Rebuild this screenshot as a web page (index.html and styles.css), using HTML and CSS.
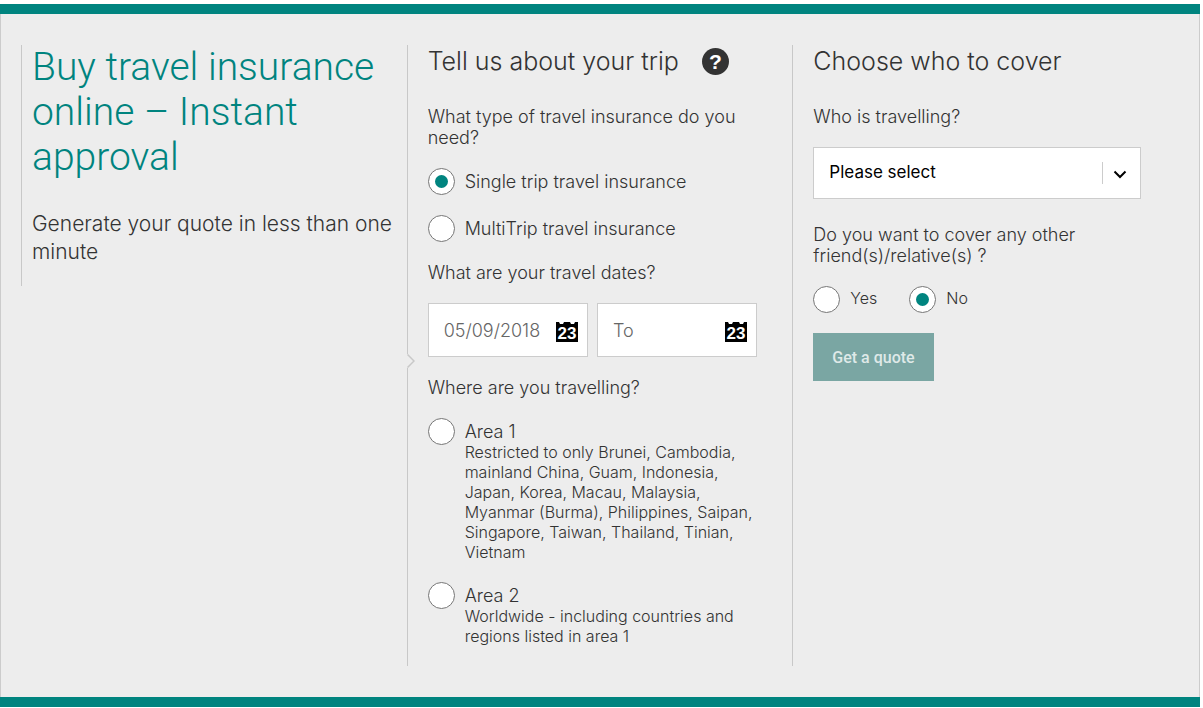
FILE: index.html
```
<!DOCTYPE html>
<html lang="en">
  <head>
    <meta charset="UTF-8" />
    <meta name="viewport" content="width=device-width, initial-scale=1.0" />
    <title>Travel insurance</title>
    <link rel="stylesheet" href="styles.css">
  </head>
  <body>
    <form class="quote">
      <section class="column intro">
        <h1>Buy travel insurance online – Instant approval</h1>
        <p class="lead">Generate your quote in less than one minute</p>
      </section>

      <section class="column trip">
        <!-- Arrow pointing from the intro to the form -->
        <svg class="pointer" width="8" height="14" viewBox="0 0 8 14" aria-hidden="true">
          <path d="M0 0h1L7 7 1 14H0z" fill="#ededed" />
          <path d="M0.5 0.5L7 7L0.5 13.5" fill="none" stroke="#c8c8c8" stroke-width="1.5" />
        </svg>

        <div class="heading">
          <h2>Tell us about your trip</h2>
          <button type="button" class="help" aria-label="Help">?</button>
        </div>

        <fieldset>
          <legend>What type of travel insurance do you need?</legend>
          <div class="options">
            <label class="option">
              <input type="radio" name="type" value="single" checked />
              <span class="option-text">Single trip travel insurance</span>
            </label>
            <label class="option">
              <input type="radio" name="type" value="multi" />
              <span class="option-text">MultiTrip travel insurance</span>
            </label>
          </div>
        </fieldset>

        <fieldset>
          <legend>What are your travel dates?</legend>
          <div class="dates">
            <div class="date">
              <input type="text" id="date-from" value="05/09/2018" aria-label="From" />
              <label for="date-from">
                <svg class="calendar" width="22" height="20" viewBox="0 0 22 20" aria-hidden="true">
                  <path d="M0 0h3l1 2h3l1-2h6l1 2h3l1-2h3v20H0z" />
                  <text x="11" y="17">23</text>
                </svg>
              </label>
            </div>
            <div class="date">
              <input type="text" id="date-to" placeholder="To" aria-label="To" />
              <label for="date-to">
                <svg class="calendar" width="22" height="20" viewBox="0 0 22 20" aria-hidden="true">
                  <path d="M0 0h3l1 2h3l1-2h6l1 2h3l1-2h3v20H0z" />
                  <text x="11" y="17">23</text>
                </svg>
              </label>
            </div>
          </div>
        </fieldset>

        <fieldset>
          <legend>Where are you travelling?</legend>
          <div class="options">
            <label class="option">
              <input type="radio" name="area" value="1" />
              <span class="option-text">
                Area 1
                <small>Restricted to only Brunei, Cambodia, mainland China, Guam, Indonesia, Japan, Korea, Macau, Malaysia, Myanmar (Burma), Philippines, Saipan, Singapore, Taiwan, Thailand, Tinian, Vietnam</small>
              </span>
            </label>
            <label class="option">
              <input type="radio" name="area" value="2" />
              <span class="option-text">
                Area 2
                <small>Worldwide - including countries and regions listed in area 1</small>
              </span>
            </label>
          </div>
        </fieldset>
      </section>

      <section class="column cover">
        <div class="heading">
          <h2>Choose who to cover</h2>
        </div>

        <label class="question" for="travellers">Who is travelling?</label>
        <div class="select">
          <select id="travellers">
            <option>Please select</option>
            <option>Myself</option>
            <option>Myself and my family</option>
          </select>
          <svg class="chevron" width="14" height="9" viewBox="0 0 14 9" aria-hidden="true">
            <path d="M1.5 1.5L7 7L12.5 1.5" fill="none" stroke="#000" stroke-width="2" />
          </svg>
        </div>

        <fieldset>
          <legend>Do you want to cover any other friend(s)/relative(s) ?</legend>
          <div class="options inline">
            <label class="option">
              <input type="radio" name="others" value="yes" />
              <span class="option-text">Yes</span>
            </label>
            <label class="option">
              <input type="radio" name="others" value="no" checked />
              <span class="option-text">No</span>
            </label>
          </div>
        </fieldset>

        <button type="submit" class="submit" disabled>Get a quote</button>
      </section>
    </form>
  </body>
</html>
```
FILE: styles.css
```
* {
  box-sizing: border-box;
}

body {
  margin: 4px 3px 0 0;
  background-color: #fff;
  color: #333;
  font-family: Inter, "Liberation Sans", sans-serif;
  font-size: 18px;
  font-weight: 300;
  line-height: 21px;
}

.quote {
  display: grid;
  grid-template-columns: repeat(3, minmax(0, 1fr));
  align-items: start;
  padding: 31px 22px 31px 21px;
  background-color: #ededed;
  border-top: 10px solid #00847f;
  border-bottom: 10px solid #00847f;
  box-shadow: inset 1px 0 #ccc, inset -1px 0 #ccc;
}

.column {
  position: relative;
  border-left: 1px solid #c8c8c8;
  padding: 0 35px 20px 20px;
}

.cover {
  align-self: stretch;
  padding-right: 37px;
}

.intro {
  padding: 0 10px 20px;
}

h1 {
  margin: 0 0 30px;
  color: #00847f;
  font-family: Roboto, "Liberation Sans", sans-serif;
  font-size: 39px;
  font-weight: 300;
  line-height: 45px;
}

.lead {
  margin: 0;
  font-size: 21px;
  line-height: 28px;
}

.heading {
  display: flex;
  align-items: center;
  gap: 23px;
  margin-bottom: 29px;
}

h2 {
  margin: 0;
  font-size: 25px;
  font-weight: 300;
  line-height: 32px;
}

.help {
  width: 27px;
  height: 27px;
  padding: 0;
  border: none;
  border-radius: 50%;
  background-color: #333;
  color: #fff;
  font: bold 21px/27px "Liberation Sans", sans-serif;
  cursor: pointer;
}

.pointer {
  position: absolute;
  top: 309px;
  left: -1px;
}

fieldset {
  min-width: 0;
  margin: 0 0 20px;
  padding: 0;
  border: none;
}

.trip fieldset:last-child {
  margin-bottom: 0;
}

legend,
.question {
  display: block;
  margin-bottom: 20px;
  padding: 0;
}

.options {
  display: flex;
  flex-direction: column;
  gap: 20px;
}

.options.inline {
  flex-direction: row;
  gap: 32px;
}

.option {
  display: flex;
  align-items: flex-start;
  gap: 10px;
}

.option-text {
  padding-top: 3px;
}

.inline .option-text {
  padding-top: 2px;
  font-size: 16px;
}

.option small {
  display: block;
  font-size: 16px;
  line-height: 20px;
}

input[type="radio"] {
  appearance: none;
  flex: none;
  display: grid;
  place-items: center;
  width: 27px;
  height: 27px;
  margin: 0;
  border: 1px solid #767676;
  border-radius: 50%;
  background-color: #fff;
}

input[type="radio"]:checked::before {
  content: "";
  width: 13px;
  height: 13px;
  border-radius: 50%;
  background-color: #00847f;
}

.dates {
  display: flex;
  gap: 9px;
}

.date {
  flex: 1;
  display: flex;
  align-items: center;
  min-width: 0;
  height: 54px;
  padding: 0 9px 0 15px;
  border: 1px solid #ccc;
  background-color: #fff;
}

.date input {
  flex: 1;
  min-width: 0;
  padding: 0;
  border: none;
  outline: none;
  background: none;
  color: #666;
  font: inherit;
}

.date input::placeholder {
  color: #666;
}

.calendar {
  display: block;
  margin-top: 3px;
}

.calendar text {
  fill: #fff;
  font: bold 17px "Liberation Sans Narrow", "Liberation Sans", sans-serif;
  text-anchor: middle;
}

.select {
  position: relative;
  margin-bottom: 25px;
}

.select select {
  appearance: none;
  display: block;
  width: 100%;
  height: 52px;
  padding: 0 50px 2px 15px;
  border: 1px solid #ccc;
  border-radius: 0;
  background: #fff linear-gradient(#ccc, #ccc) no-repeat right 37px center / 1px 22px;
  color: #000;
  font: 400 17px Inter, "Liberation Sans", sans-serif;
}

.chevron {
  position: absolute;
  top: 23px;
  right: 14px;
  pointer-events: none;
}

.submit {
  height: 48px;
  padding: 0 19px;
  border: none;
  background-color: #7aa6a3;
  color: #dfe9e8;
  font: 500 16px Roboto, "Liberation Sans", sans-serif;
}
```
